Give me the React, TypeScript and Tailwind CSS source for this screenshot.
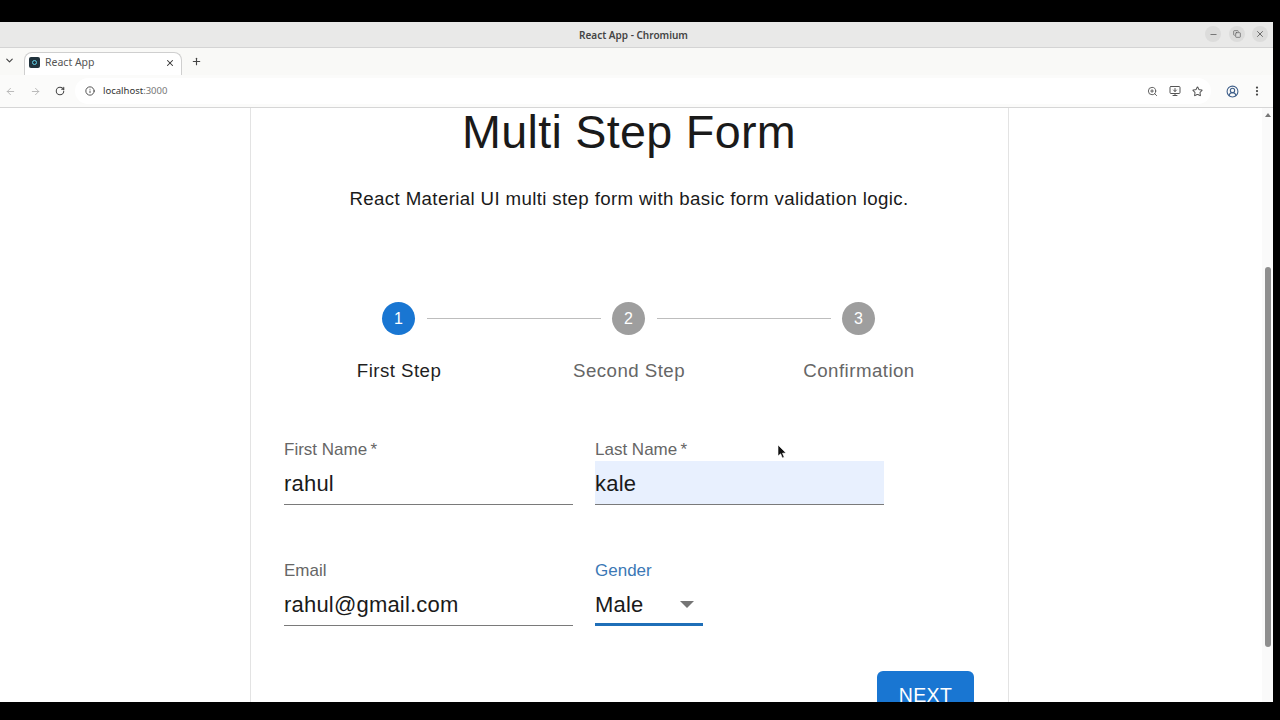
import { ArrowLeft, ArrowRight, ChevronDown, CircleUserRound, EllipsisVertical, Info, MonitorDown, Plus, RotateCw, Star, X, ZoomIn, Minus, Copy } from 'lucide-react';

function Field({ label, value, className }: { label: string; value: string; className?: string }) {
  return (
    <div className="w-[289px]">
      <div className="h-[21px] text-[17px] leading-[21px] text-[#666666]">{label}</div>
      <div className={`mt-[1px] h-[44px] border-b border-[#7a7a7a] text-[22px] leading-[46px] tracking-[0.2px] text-[#1a1a1a] ${className ?? ''}`}>
        {value}
      </div>
    </div>
  );
}

function Step({ n, active }: { n: number; active?: boolean }) {
  return (
    <div
      className={`flex h-[33px] w-[33px] shrink-0 items-center justify-center rounded-full text-[16px] text-white ${
        active ? 'bg-[#1976d2]' : 'bg-[#9e9e9e]'
      }`}
    >
      {n}
    </div>
  );
}

export default function App() {
  return (
    <div className="h-[720px] w-[1280px] overflow-hidden bg-black font-['Liberation_Sans',sans-serif]">
      <div className="flex h-[702px] w-[1273px] flex-col pt-[22px]">
        {/* window title */}
        <div className="relative flex h-[25px] shrink-0 items-center justify-center bg-[#e9e9e8] pt-[2px] font-['Noto_Sans',sans-serif] text-[10px] font-semibold text-[#444444]">
          <span className="ml-[-6px]">React App - Chromium</span>
          <div className="absolute right-[5px] top-[4px] flex gap-[7.5px]">
            <div className="flex h-[16px] w-[16px] items-center justify-center rounded-full bg-[#dcdcdb]">
              <Minus size={9} className="text-[#555555]" />
            </div>
            <div className="flex h-[16px] w-[16px] items-center justify-center rounded-full bg-[#dcdcdb]">
              <Copy size={8} className="text-[#555555]" />
            </div>
            <div className="flex h-[16px] w-[16px] items-center justify-center rounded-full bg-[#dcdcdb]">
              <X size={10} className="text-[#555555]" />
            </div>
          </div>
        </div>

        {/* tab strip */}
        <div className="flex h-[28px] shrink-0 items-end border-t border-[#d4d4d4] bg-[#f9f9f7] font-['Noto_Sans',sans-serif]">
          <div className="flex h-[26px] w-[24px] items-center justify-center pb-[3px]">
            <ChevronDown size={11} strokeWidth={2.5} className="ml-[-5px] text-[#444444]" />
          </div>
          <div className="flex h-[23px] w-[158px] items-center rounded-t-[8px] border border-b-0 border-[#cfcfcf] bg-white pb-[3px] pl-[4px] pr-[6px] text-[10.5px] text-[#555555]">
            <div className="flex h-[11px] w-[11px] items-center justify-center rounded-[2px] bg-[#20323c]">
              <div className="h-[5px] w-[5px] rounded-full border border-[#5fd0e8]" />
            </div>
            <span className="ml-[5px]">React App</span>
            <X size={10} strokeWidth={2.5} className="ml-auto text-[#333333]" />
          </div>
          <div className="flex h-[26px] w-[28px] items-center justify-center pb-[2px]">
            <Plus size={11} strokeWidth={2.5} className="text-[#444444]" />
          </div>
        </div>

        {/* toolbar */}
        <div className="flex h-[33px] shrink-0 items-center border-b border-[#d6d6d6] bg-[#fbfbfa] font-['Noto_Sans',sans-serif]">
          <ArrowLeft size={11} className="ml-[5px] text-[#b5b5b5]" />
          <ArrowRight size={11} className="ml-[14px] text-[#b5b5b5]" />
          <RotateCw size={10} strokeWidth={2.5} className="ml-[14px] text-[#444444]" />
          <div className="ml-[10px] flex h-[26px] w-[1136px] items-center rounded-full bg-white pl-[10px] pr-[8px]">
            <Info size={10} strokeWidth={2.2} className="text-[#444444]" />
            <span className="ml-[8px] text-[9.5px] text-[#333333]">
              localhost<span className="text-[#777777]">:3000</span>
            </span>
            <div className="ml-auto flex items-center gap-[11px] text-[#555555]">
              <ZoomIn size={11} />
              <MonitorDown size={12} />
              <Star size={11} strokeWidth={2.2} />
            </div>
          </div>
          <CircleUserRound size={13} className="ml-[15px] text-[#3f5f8a]" />
          <EllipsisVertical size={12} strokeWidth={2.5} className="ml-[12px] text-[#444444]" />
        </div>

        {/* page */}
        <div className="flex min-h-0 flex-1 overflow-hidden bg-white">
          <div className="min-w-0 flex-1 pl-[250px]">
            <div className="h-[620px] w-[759px] border-x border-[#e3e3e3] pl-[33px]">
              <h1 className="w-[690px] text-center text-[46.7px] leading-[48px] tracking-[0.3px] text-[#1a1a1a]">Multi Step Form</h1>
              <p className="mt-[29px] w-[690px] text-center text-[18.7px] leading-[28px] tracking-[0.36px] text-[#1a1a1a]">
                React Material UI multi step form with basic form validation logic.
              </p>

              <div className="ml-[98px] mt-[89px] flex items-center">
                <Step n={1} active />
                <div className="ml-[12px] mr-[11px] h-px w-[174px] bg-[#bdbdbd]" />
                <Step n={2} />
                <div className="ml-[12px] mr-[11px] h-px w-[174px] bg-[#bdbdbd]" />
                <Step n={3} />
              </div>
              <div className="mt-[22px] grid w-[690px] grid-cols-3 text-center text-[18.7px] leading-[28px] tracking-[0.45px] text-[#666666]">
                <div className="text-[#1f1f1f]">First Step</div>
                <div>Second Step</div>
                <div>Confirmation</div>
              </div>

              <div className="mt-[54px] flex gap-[22px]">
                <Field label={'First Name\u2009*'} value="rahul" />
                <Field label={'Last Name\u2009*'} value="kale" className="bg-[#e8f0fe]" />
              </div>
              <div className="mt-[55px] flex gap-[22px]">
                <Field label="Email" value="rahul@gmail.com" />
                <div className="w-[108px]">
                  <div className="h-[21px] text-[17px] leading-[21px] text-[#3b78b5]">Gender</div>
                  <div className="mt-[1px] flex h-[44px] items-center justify-between border-b-[3px] border-[#1f6fb8] pr-[9px] pt-[3px] text-[22px] tracking-[0.2px] text-[#1a1a1a]">
                    <span>Male</span>
                    <div className="h-0 w-0 border-x-[7px] border-t-[7px] border-x-transparent border-t-[#757575]" />
                  </div>
                </div>
              </div>
              <div className="mt-[45px] flex w-[690px] justify-end">
                <button className="h-[50px] w-[97px] rounded-[6px] bg-[#1976d2] text-[19.5px] tracking-[0.4px] text-white">NEXT</button>
              </div>
            </div>
          </div>
          <div className="flex w-[11px] shrink-0 flex-col items-center bg-[#fafafa] pt-[5px]">
            <div className="h-0 w-0 border-x-[3px] border-b-[4px] border-x-transparent border-b-[#777777]" />
            <div className="mt-[150px] h-[380px] w-[6px] rounded-full bg-[#8f8f8f]" />
          </div>
        </div>
      </div>

      {/* mouse pointer */}
      <svg className="absolute left-[777px] top-[444px]" width="10" height="15" viewBox="0 0 10 15">
        <path d="M1 1 L1 12 L3.6 9.8 L5.4 14 L7.2 13.2 L5.5 9.2 L9 9 Z" fill="#111111" stroke="#ffffff" strokeWidth="0.6" />
      </svg>
    </div>
  );
}
